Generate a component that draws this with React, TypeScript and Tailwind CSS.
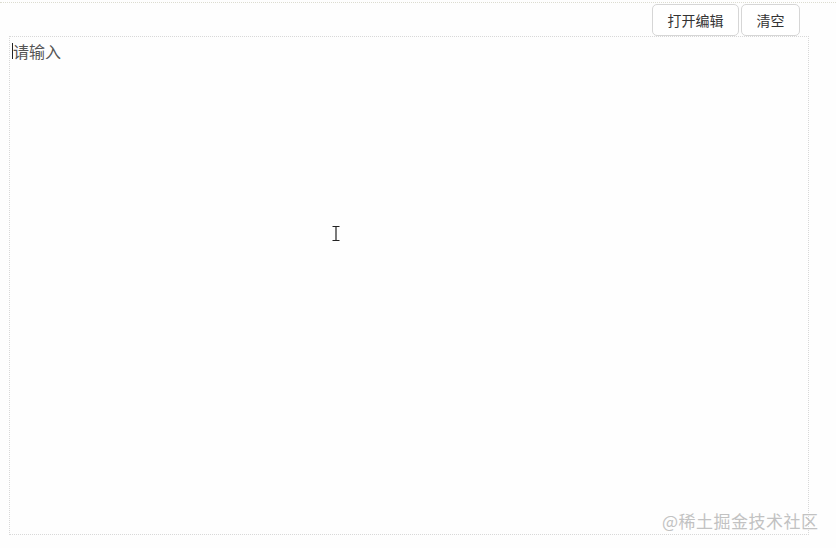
import React from "react";

export default function App() {
  return (
    <div
      className="relative w-[836px] h-[548px] bg-[#fefefe] overflow-hidden"
      style={{ fontFamily: '"Noto Sans CJK SC", "Noto Sans", sans-serif' }}
    >
      <div className="h-[3px] border-b border-dotted border-[#dcdcd0]" />
      <div className="flex justify-end gap-[2px] pr-[36px] pt-px">
        <button className="w-[87px] h-[32px] rounded-[5px] border border-[#d6d6d6] bg-white text-[14px] text-[#333] leading-none">
          打开编辑
        </button>
        <button className="w-[59px] h-[32px] rounded-[5px] border border-[#d6d6d6] bg-white text-[14px] text-[#333] leading-none">
          清空
        </button>
      </div>
      <div className="ml-[9px] w-[800px] h-[499px] border border-dotted border-[#d8d8d8] pl-[2px] pt-[5px]">
        <div className="flex items-center h-[18px]">
          <span className="w-px h-[16px] bg-[#222]" />
          <span className="text-[16px] leading-none text-[#555]">请输入</span>
        </div>
      </div>
      <svg className="absolute left-[331px] top-[225px]" width="10" height="17" viewBox="0 0 10 17">
        <path d="M1.5 1.5h2.5M6 1.5h2.5M5 2v13M1.5 15.5h2.5M6 15.5h2.5M4 1.5h2M4 15.5h2" stroke="#222" strokeWidth="1.2" fill="none" />
      </svg>
      <div className="absolute left-[662px] top-[508px] text-[17px] text-[#c2c2c2] tracking-[0.5px]">
        @稀土掘金技术社区
      </div>
    </div>
  );
}
